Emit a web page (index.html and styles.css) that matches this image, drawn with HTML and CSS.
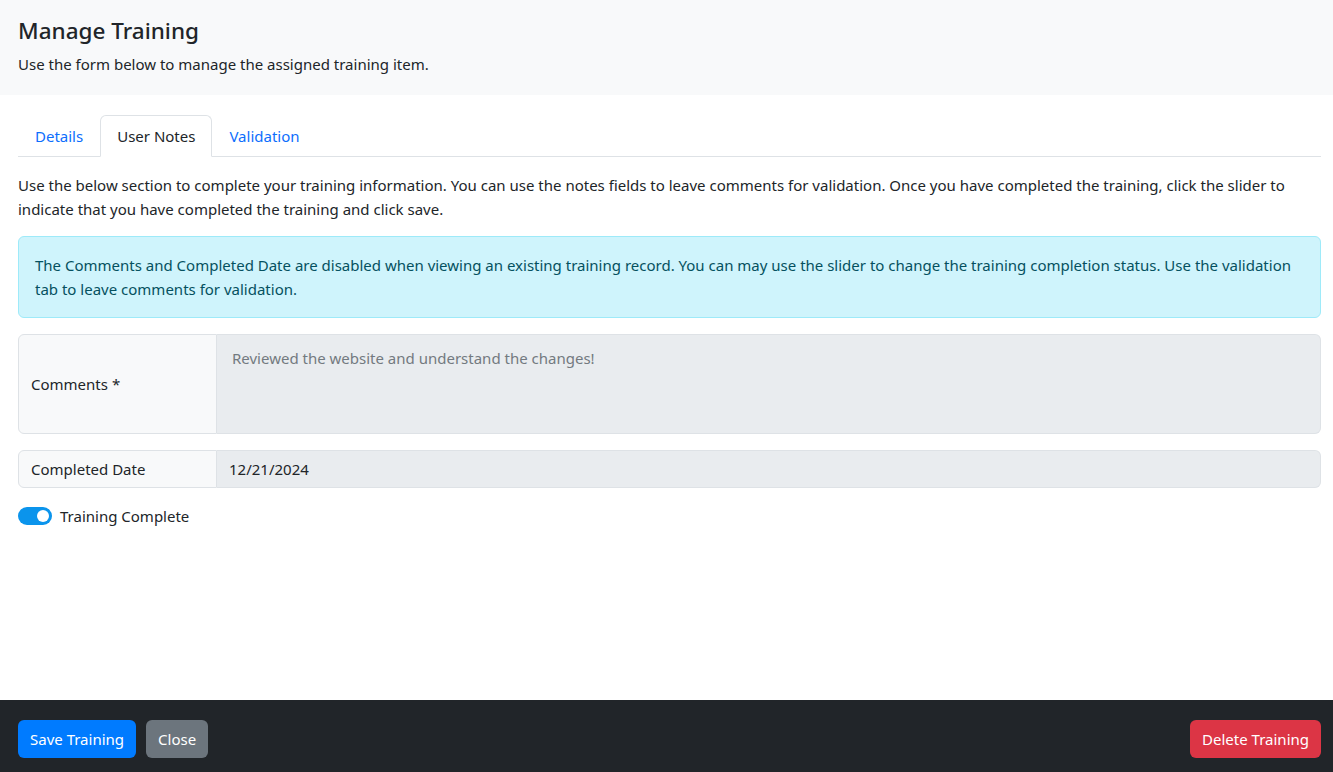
FILE: index.html
```html
<!DOCTYPE html>
<html>

<head>
  <title>Manage Training</title>
  <link rel="stylesheet" href="styles.css">
</head>

<body>
  <div class="page">
    <div class="header">
      <h1>Manage Training</h1>
      <p>Use the form below to manage the assigned training item.</p>
    </div>

    <div class="content">
      <ul class="tabs">
        <li><a href="#">Details</a></li>
        <li class="active"><a href="#">User Notes</a></li>
        <li><a href="#">Validation</a></li>
      </ul>

      <p class="intro">Use the below section to complete your training information. You can use the notes fields to leave comments for validation. Once you have completed the training, click the slider to indicate that you have completed the training and click save.</p>

      <div class="alert">
        The Comments and Completed Date are disabled when viewing an existing training record. You can may use the slider to change the training completion status. Use the validation tab to leave comments for validation.
      </div>

      <div class="input-group tall">
        <label class="group-label">Comments <span class="req">*</span></label>
        <div class="group-field placeholder">Reviewed the website and understand the changes!</div>
      </div>

      <div class="input-group">
        <label class="group-label">Completed Date</label>
        <div class="group-field">12/21/2024</div>
      </div>

      <div class="switch-row">
        <span class="switch"><span class="knob"></span></span>
        <span>Training Complete</span>
      </div>
    </div>

    <div class="footer">
      <div class="left">
        <button class="btn primary">Save Training</button>
        <button class="btn secondary">Close</button>
      </div>
      <button class="btn danger">Delete Training</button>
    </div>
  </div>
</body>

</html>
```

FILE: styles.css
```css
body {
  margin: 0;
  font-family: "Noto Sans", "Open Sans", sans-serif;
  font-size: 15px;
  line-height: 24px;
  color: #212529;
  background: #fff;
}

.page {
  display: flex;
  flex-direction: column;
  height: 100vh;
}

.header {
  background-color: #f8f9fa;
  padding: 16px 18px 19px;
}

.header h1 {
  margin: 0 0 7px;
  font-size: 22.5px;
  line-height: 29px;
  font-weight: 500;
}

.header p {
  margin: 0;
}

.content {
  flex: 1;
  padding: 20px 12px 0 18px;
}

.tabs {
  display: flex;
  list-style: none;
  margin: 0;
  padding: 0;
  border-bottom: 1px solid #dee2e6;
}

.tabs li {
  margin-bottom: -1px;
}

.tabs a {
  display: block;
  padding: 8px 16px;
  color: #0d6efd;
  text-decoration: none;
  border: 1px solid transparent;
  border-radius: 6px 6px 0 0;
}

.tabs li.active a {
  color: #212529;
  background: #fff;
  border-color: #dee2e6 #dee2e6 #fff;
}

.intro {
  margin: 16px 0 15px;
}

.alert {
  background-color: #cff4fc;
  border: 1px solid #9eeaf9;
  border-radius: 6px;
  color: #055160;
  padding: 16px;
  margin-bottom: 16px;
}

.input-group {
  display: flex;
  height: 38px;
  margin-bottom: 16px;
}

.input-group.tall {
  height: 100px;
}

.group-label {
  width: 199px;
  box-sizing: border-box;
  display: flex;
  align-items: center;
  padding: 0 12px;
  background-color: #f8f9fa;
  border: 1px solid #dee2e6;
  border-radius: 6px 0 0 6px;
}

.req {
  margin-left: 4px;
}

.group-field {
  flex: 1;
  display: flex;
  align-items: center;
  padding: 0 12px;
  background-color: #e9ecef;
  border: 1px solid #dee2e6;
  border-left: none;
  border-radius: 0 6px 6px 0;
}

.group-field.placeholder {
  align-items: flex-start;
  padding: 11px 15px;
  color: #737a80;
}

.switch-row {
  display: flex;
  align-items: center;
  gap: 8px;
}

.switch {
  width: 34px;
  height: 18px;
  border-radius: 9px;
  background-color: #0b94ec;
  display: flex;
  align-items: center;
  justify-content: flex-end;
  padding: 0 3px;
  box-sizing: border-box;
}

.switch .knob {
  width: 12px;
  height: 12px;
  border-radius: 50%;
  background: #fff;
}

.footer {
  background-color: #212529;
  height: 72px;
  padding: 20px 12px 0 18px;
  display: flex;
  align-items: flex-start;
  justify-content: space-between;
  box-sizing: border-box;
}

.footer .left {
  display: flex;
  gap: 10px;
}

.btn {
  font-family: inherit;
  font-size: 15px;
  line-height: 24px;
  height: 38px;
  padding: 6px 12px;
  border: none;
  border-radius: 6px;
  color: #fff;
  cursor: pointer;
}

.btn.primary {
  background-color: #007bff;
}

.btn.secondary {
  background-color: #6c757d;
}

.btn.danger {
  background-color: #dc3545;
}
```
